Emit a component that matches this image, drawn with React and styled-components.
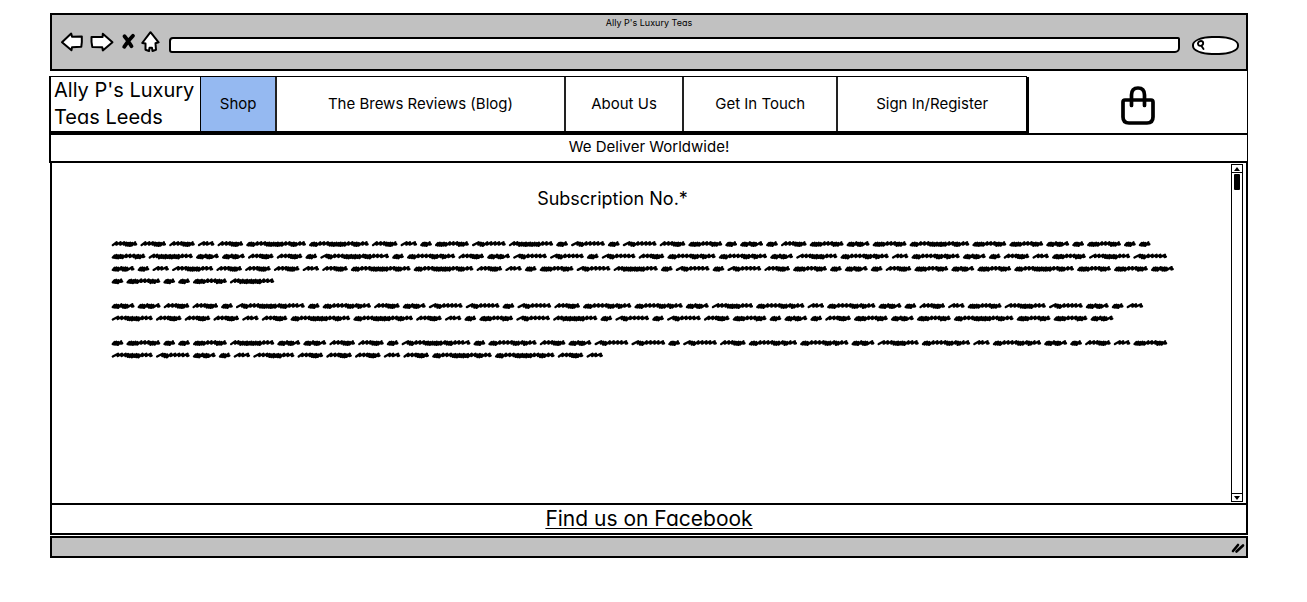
import React from "react";
import styled, { createGlobalStyle } from "styled-components";

const GlobalStyle = createGlobalStyle`
  * { box-sizing: border-box; }
  body {
    margin: 0;
    background: #fff;
    color: #000;
    font-family: Inter, "Liberation Sans", sans-serif;
    font-feature-settings: "cv11";
  }
  button, input { font: inherit; color: inherit; }
`;

const Page = styled.div`
  padding: 13px 59px 44px 49px;
`;

const Browser = styled.div`
  display: flex;
  flex-direction: column;
`;

const Chrome = styled.header`
  height: 58px;
  margin-left: 1px;
  background: #c1c1c1;
  border: 2px solid #000;
`;

const WindowTitle = styled.div`
  height: 16px;
  font-size: 9px;
  line-height: 16px;
  text-align: center;
`;

const Toolbar = styled.form`
  display: flex;
  align-items: center;
  height: 28px;
  padding: 0 7px 0 8px;
`;

const ToolButton = styled.button`
  display: flex;
  width: ${(p) => p.$width}px;
  height: 28px;
  padding: 0;
  border: 0;
  background: none;
`;

const Address = styled.input`
  flex: 1;
  min-width: 0;
  height: 16px;
  margin-left: 8px;
  padding: 0 6px;
  font-size: 10px;
  background: #fff;
  border: 2px solid #000;
  border-radius: 4px 2px 5px 3px;
`;

const SearchBox = styled.label`
  display: flex;
  align-items: center;
  width: 47px;
  height: 19px;
  margin-left: 12px;
  padding-left: 2px;
  background: #fff;
  border: 2px solid #000;
  border-radius: 20px / 9px;
`;

const SearchInput = styled.input`
  flex: 1;
  min-width: 0;
  padding: 0;
  height: 12px;
  font-size: 10px;
  border: 0;
  background: none;
`;

const SiteHeader = styled.div`
  display: grid;
  grid-template-columns: 152px 828fr 219fr;
  height: 62px;
  padding: 5px 0 2px;
  border-right: 1px solid #000;
`;

const Brand = styled.a`
  padding: 0 3px;
  border: 2px solid #000;
  border-right-width: 1px;
  border-top-width: 1px;
  font-size: 20px;
  line-height: 27px;
  color: #000;
  text-decoration: none;
  white-space: nowrap;
`;

const Menu = styled.nav`
  display: flex;
  margin-right: 1px;
  border-top: 1px solid #000;
  border-bottom: 2px solid #000;
  border-right: 1px solid #000;
  box-shadow: 2px 1px 0 #000;
`;

const MenuLink = styled.a`
  flex: ${(p) => p.$grow} 1 0;
  display: flex;
  align-items: center;
  justify-content: center;
  padding-bottom: 1px;
  font-size: 15px;
  color: #000;
  text-decoration: none;
  white-space: nowrap;
  background: ${(p) => (p.$active ? "#95b9f1" : "#fff")};
  & + & { border-left: 2px solid #222; }
`;

const BasketArea = styled.div`
  display: flex;
  align-items: center;
  justify-content: center;
`;

const BasketButton = styled.button`
  display: flex;
  padding: 0;
  border: 0;
  background: none;
`;

const Banner = styled.div`
  height: 30px;
  border: 2px solid #000;
  border-right-width: 1px;
  font-size: 15px;
  line-height: 23px;
  text-align: center;
`;

const Content = styled.main`
  display: flex;
  min-height: 340px;
  margin-left: 1px;
  border-left: 2px solid #000;
  border-right: 2px solid #000;
`;

const Article = styled.article`
  flex: 1;
  min-width: 0;
  padding: 24px 56px 0 60px;
`;

const Heading = styled.h1`
  margin: 0 0 28px;
  padding-right: 62px;
  font-size: 18px;
  font-weight: 400;
  line-height: 24px;
  text-align: center;
`;

const Copy = styled.div`
  display: flex;
  flex-direction: column;
  gap: 12px;
  svg { display: block; overflow: visible; }
`;

const Scrollbar = styled.div`
  display: flex;
  flex-direction: column;
  width: 12px;
  margin: 1px 3px 1px 0;
  border: 1px solid #000;
`;

const ScrollButton = styled.button`
  display: flex;
  align-items: center;
  justify-content: center;
  height: 8px;
  padding: 0;
  background: #fff;
  border: 0 solid #000;
  border-width: ${(p) => (p.$end ? "1px 0 0" : "0 0 1px")};
`;

const Track = styled.div`
  flex: 1;
  padding: 1px 2px;
`;

const Thumb = styled.div`
  height: 16px;
  background: #000;
  border-radius: 1px;
`;

const Footer = styled.footer`
  height: 32px;
  margin-left: 1px;
  border: 2px solid #000;
  font-size: 21px;
  line-height: 27px;
  text-align: center;
`;

const FooterLink = styled.a`
  color: #000;
  text-decoration: underline;
  text-decoration-thickness: 1px;
  text-underline-offset: 2px;
  text-decoration-skip-ink: none;
`;

const StatusBar = styled.div`
  display: flex;
  align-items: center;
  justify-content: flex-end;
  height: 22px;
  margin: 1px 0 0 1px;
  padding: 2px 1px 0 0;
  background: #c1c1c1;
  border: 2px solid #000;
`;

/* Pen strokes of each scribbled word: the horizontal step of every stroke, and the advance to the next word. */
const WORDS = {
  o: { adv: 14.8, steps: [1.8, 1.8, 2, 3] },
  s: { adv: 19.6, steps: [5, 3.4, 5] },
  p: { adv: 26, steps: [1.8, 1.8, 2, 3, 2, 2, 2, 5] },
  t: { adv: 28.75, steps: [4, 4, 3.6, 2.2, 2, 2, 2, 3] },
  g: { adv: 36.95, steps: [1.8, 1.8, 2, 2, 2, 3.6, 3.6, 3.6, 2, 2, 2, 3] },
  w: { adv: 36.9, steps: [5, 2, 2, 3.6, 3.6, 3.6, 3.4, 4] },
  z: { adv: 44.3, steps: [5, 3.6, 3.6, 2.2, 2, 2, 2, 2, 2, 3.6, 3.6, 4] },
  m: { adv: 47.4, steps: [4, 3, 2, 2, 2, 2, 2, 2, 2, 2, 2, 2, 3.6, 3.6, 4] },
  n: { adv: 51.4, steps: [1.8, 2, 2, 3.6, 3.6, 3.6, 3.6, 2, 2, 2, 3.4, 2, 2, 3, 4] },
  q: { adv: 62.8, steps: [1.8, 2, 2, 3.6, 3.6, 3.6, 2, 2, 2, 2, 2, 2, 2, 2, 3.4, 3.6, 2, 2, 2, 3.6, 3.6] },
  x: { adv: 71.9, steps: [5, 2, 2, 3.6, 3.6, 3.6, 2, 2, 2, 2, 2, 2, 2, 2, 3.6, 2, 2, 2, 3.6, 3.6, 3.6, 5] },
};

const PARAGRAPHS = [
  [
    "tttstqqtsogwmowowtgopotgpgqggpogoo",
    "gmppttoxontpwwowtnnpznsnpotsgzw",
    "posztttstqqtsogwmowowtgopotgpgqggp",
    "ogoogm",
  ],
  ["ppttoxontpwwowtnnpznsnpotsgzwpos", "ztttstqqtsogwmowowtgopotgpgqggp"],
  ["ogoogmppttoxontpwwowtnnpznsnpotsg", "zwposztttstqqts"],
];

const LINE = 12.4;

function wordPath({ adv, steps }, x0, y) {
  const width = adv - 6.4;
  const scale = width / steps.reduce((a, b) => a + b, 0);
  let x = x0 + 0.8;
  let d = `M${x.toFixed(2)} ${(y + 1.2).toFixed(2)}`;
  steps.forEach((step, i) => {
    x += step * scale;
    const top = y - (step > 2.5 ? 1.6 : 0.9 + (i % 2) * 0.4);
    const bottom = y + (step > 2.5 ? 0.8 : 1.6 + (i % 3) * 0.2);
    d += `L${x.toFixed(2)} ${top.toFixed(2)}`;
    d += `L${(x - 0.4).toFixed(2)} ${bottom.toFixed(2)}`;
  });
  return d + `l1.4 -0.4`;
}

function Scribble({ lines }) {
  const d = lines
    .map((line, row) => {
      let x = 0;
      return [...line]
        .map((key) => {
          const path = wordPath(WORDS[key], x, 4.9 + row * LINE);
          x += WORDS[key].adv;
          return path;
        })
        .join("");
    })
    .join("");
  return (
    <svg width="1064" height={Math.round(lines.length * LINE)} role="img" aria-label="Placeholder paragraph">
      <path d={d} fill="none" stroke="#000" strokeWidth="2.3" strokeLinecap="round" strokeLinejoin="round" />
    </svg>
  );
}

function Icon({ width, height = 24, d }) {
  return (
    <svg width={width} height={height} viewBox={`0 0 ${width} ${height}`} aria-hidden="true">
      <path d={d} fill="#fff" stroke="#000" strokeWidth="2" strokeLinejoin="round" strokeLinecap="round" />
    </svg>
  );
}

const MENU = [
  { label: "Shop", grow: 75, active: true },
  { label: "The Brews Reviews (Blog)", grow: 289 },
  { label: "About Us", grow: 118 },
  { label: "Get In Touch", grow: 153 },
  { label: "Sign In/Register", grow: 190 },
];

export default function App() {
  return (
    <Page>
      <GlobalStyle />
      <Browser>
        <Chrome>
          <WindowTitle>Ally P's Luxury Teas</WindowTitle>
          <Toolbar onSubmit={(e) => e.preventDefault()}>
            <ToolButton type="button" aria-label="Back" $width={30}>
              <Icon width={30} d="M2 11.2L11.2 2.6L12 5.8L21.800 5.400C22 9 22 12 21.300 15.800L12 16.200L11.500 19.200Z" />
            </ToolButton>
            <ToolButton type="button" aria-label="Forward" $width={30}>
              <Icon width={30} d="M1.500 6L12.600 6L12.800 2.800L22.500 11.200L12.800 19.400L12.300 16.300L2.300 16C1.500 13 1.300 9 1.500 6Z" />
            </ToolButton>
            <ToolButton type="button" aria-label="Stop" $width={20}>
              <svg width="20" height="24" viewBox="0 0 20 24" aria-hidden="true">
                <path d="M4.500 5.200L7.500 9L11.500 15.200M13 4.800L8.500 9.800L4.200 15.800" fill="none" stroke="#000" strokeWidth="3.800" strokeLinecap="round" />
              </svg>
            </ToolButton>
            <ToolButton type="button" aria-label="Home" $width={21}>
              <Icon width={21} d="M10.500 1.200L18.600 11.300L15.500 12.300L16 18.800L12.500 20L12 16.800L9.500 16.800L9 20L5.500 18.800L5.500 12.600L2.200 12Z" />
            </ToolButton>
            <Address aria-label="Address" type="text" />
            <SearchBox>
              <svg width="10" height="12" viewBox="0 0 10 12" aria-hidden="true">
                <path d="M5 2C2.500 2 1.300 4 2.300 5.800C4 8 7.500 6.500 7.200 4C7 2.500 6 2 5 2ZM5.500 7L7.500 10" fill="none" stroke="#000" strokeWidth="1.900" strokeLinecap="round" />
              </svg>
              <SearchInput aria-label="Search" type="text" />
            </SearchBox>
          </Toolbar>
        </Chrome>

        <SiteHeader>
          <Brand href="#home">
            Ally P's Luxury
            <br />
            Teas Leeds
          </Brand>
          <Menu>
            {MENU.map((item) => (
              <MenuLink key={item.label} href="#" $grow={item.grow} $active={item.active}>
                {item.label}
              </MenuLink>
            ))}
          </Menu>
          <BasketArea>
            <BasketButton type="button" aria-label="Basket">
              <svg width="34" height="40" viewBox="0 0 34 40" aria-hidden="true">
                <path
                  d="M4 15H30Q32 15 32 17V32Q32 38 26 38H8Q2 38 2 32V17Q2 15 4 15ZM10.500 20.500V10Q10.500 3 17 3Q23.500 3 23.500 10V20.500"
                  fill="none"
                  stroke="#000"
                  strokeWidth="3.700"
                  strokeLinecap="round"
                />
              </svg>
            </BasketButton>
          </BasketArea>
        </SiteHeader>

        <Banner>We Deliver Worldwide!</Banner>

        <Content>
          <Article>
            <Heading>Subscription No.*</Heading>
            <Copy>
              {PARAGRAPHS.map((lines, i) => (
                <Scribble key={i} lines={lines} />
              ))}
            </Copy>
          </Article>
          <Scrollbar>
            <ScrollButton type="button" aria-label="Scroll up">
              <svg width="6" height="4" viewBox="0 0 6 4" aria-hidden="true"><path d="M0 4L3 0L6 4Z" /></svg>
            </ScrollButton>
            <Track>
              <Thumb />
            </Track>
            <ScrollButton type="button" aria-label="Scroll down" $end>
              <svg width="6" height="4" viewBox="0 0 6 4" aria-hidden="true"><path d="M0 0L3 4L6 0Z" /></svg>
            </ScrollButton>
          </Scrollbar>
        </Content>

        <Footer>
          <FooterLink href="#facebook">Find us on Facebook</FooterLink>
        </Footer>

        <StatusBar>
          <svg width="14" height="12" viewBox="0 0 14 12" aria-hidden="true">
            <path d="M2 9L7 3M5.500 9.500L12 3.500" fill="none" stroke="#000" strokeWidth="2.600" strokeLinecap="round" />
          </svg>
        </StatusBar>
      </Browser>
    </Page>
  );
}
